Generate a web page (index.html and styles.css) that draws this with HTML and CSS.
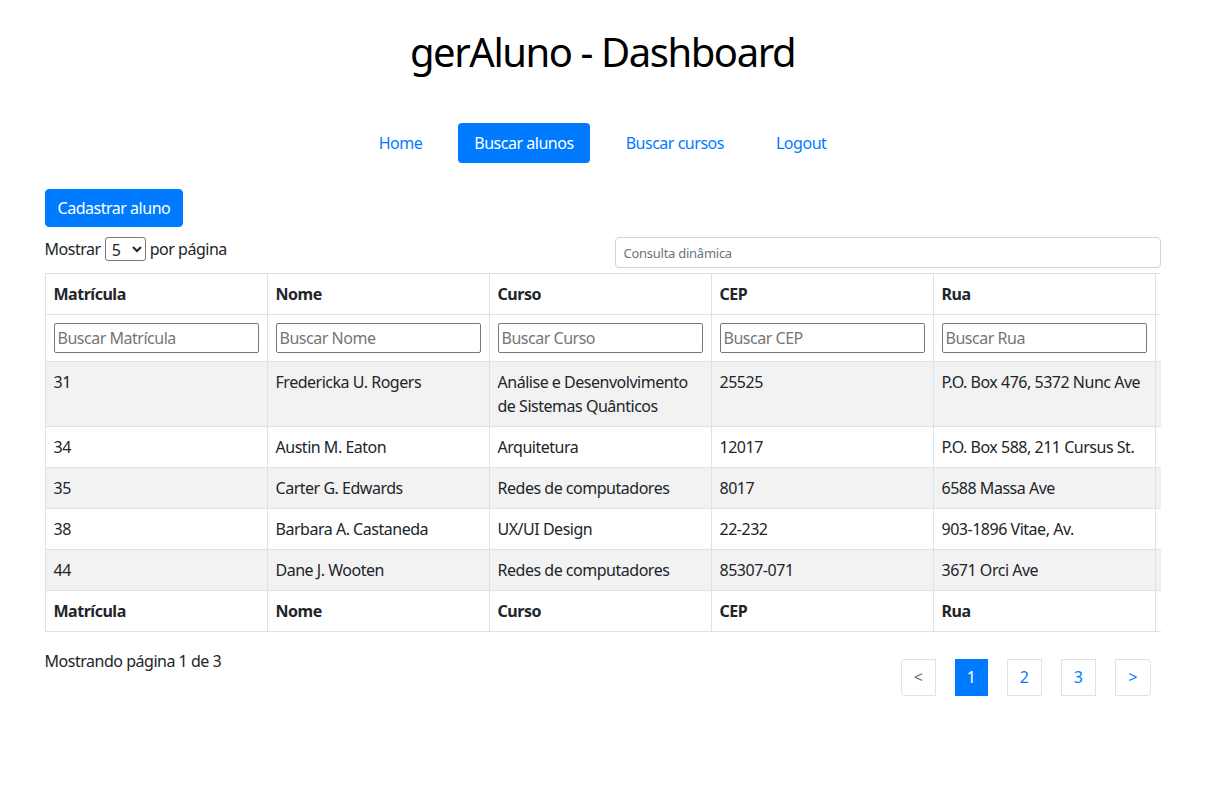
FILE: index.html
```html
<!DOCTYPE html>
<html lang="pt-br">
<head>
<meta charset="utf-8">
<title>gerAluno - Dashboard</title>
<link rel="stylesheet" href="styles.css">
</head>
<body>
<div class="page">
  <h1 class="title">gerAluno - Dashboard</h1>
  <nav class="nav">
    <a class="nav-link" href="#">Home</a>
    <a class="nav-link active" href="#">Buscar alunos</a>
    <a class="nav-link" href="#">Buscar cursos</a>
    <a class="nav-link" href="#">Logout</a>
  </nav>
  <button class="btn-primary">Cadastrar aluno</button>
  <div class="toolbar">
    <label class="length">Mostrar <select class="length-select"><option>5</option><option>10</option><option>25</option></select> por página</label>
    <input class="search" type="text" placeholder="Consulta dinâmica">
  </div>
  <div class="table-wrap">
    <table class="grid">
      <thead>
        <tr class="head"><th>Matrícula</th><th>Nome</th><th>Curso</th><th>CEP</th><th>Rua</th><th></th></tr>
        <tr class="filters">
          <td><input class="filter" placeholder="Buscar Matrícula"></td>
          <td><input class="filter" placeholder="Buscar Nome"></td>
          <td><input class="filter" placeholder="Buscar Curso"></td>
          <td><input class="filter" placeholder="Buscar CEP"></td>
          <td><input class="filter" placeholder="Buscar Rua"></td>
          <td></td>
        </tr>
      </thead>
      <tbody>
        <tr class="odd"><td>31</td><td>Fredericka U. Rogers</td><td>Análise e Desenvolvimento de Sistemas Quânticos</td><td>25525</td><td>P.O. Box 476, 5372 Nunc Ave</td><td></td></tr>
        <tr><td>34</td><td>Austin M. Eaton</td><td>Arquitetura</td><td>12017</td><td>P.O. Box 588, 211 Cursus St.</td><td></td></tr>
        <tr class="odd"><td>35</td><td>Carter G. Edwards</td><td>Redes de computadores</td><td>8017</td><td>6588 Massa Ave</td><td></td></tr>
        <tr><td>38</td><td>Barbara A. Castaneda</td><td>UX/UI Design</td><td>22-232</td><td>903-1896 Vitae, Av.</td><td></td></tr>
        <tr class="odd"><td>44</td><td>Dane J. Wooten</td><td>Redes de computadores</td><td>85307-071</td><td>3671 Orci Ave</td><td></td></tr>
      </tbody>
      <tfoot>
        <tr class="head"><th>Matrícula</th><th>Nome</th><th>Curso</th><th>CEP</th><th>Rua</th><th></th></tr>
      </tfoot>
    </table>
  </div>
  <div class="bottom">
    <div class="info">Mostrando página 1 de 3</div>
    <ul class="pagination">
      <li class="page-item disabled first"><a href="#">&lt;</a></li>
      <li class="page-item active"><a href="#">1</a></li>
      <li class="page-item"><a href="#">2</a></li>
      <li class="page-item"><a href="#">3</a></li>
      <li class="page-item last"><a href="#">&gt;</a></li>
    </ul>
  </div>
</div>
</body>
</html>
```
FILE: styles.css
```css
* { box-sizing: border-box; }
html, body { margin: 0; padding: 0; background: #fff; }
body {
  font-family: "Noto Sans", "Open Sans", sans-serif;
  font-size: 16px;
  line-height: 1.5;
  letter-spacing: -0.03em;
  color: #212529;
}
.page {
  width: 1116px;
  margin: 0 auto;
  padding-top: 28px;
}
.title {
  margin: 0;
  text-align: center;
  font-size: 40px;
  font-weight: 400;
  line-height: 48px;
  letter-spacing: -0.036em;
  color: #000;
}
.nav {
  display: flex;
  justify-content: center;
  gap: 20px;
  margin-top: 47px;
}
.nav-link {
  display: block;
  padding: 8px 16px;
  color: #007bff;
  text-decoration: none;
  border-radius: 4px;
  line-height: 24px;
}
.nav-link.active { background: #007bff; color: #fff; }
.btn-primary {
  display: block;
  margin-top: 26px;
  height: 38px;
  padding: 6px 12px;
  font-family: inherit;
  font-size: 16px;
  letter-spacing: -0.03em;
  line-height: 24px;
  color: #fff;
  background: #007bff;
  border: 1px solid #007bff;
  border-radius: 4px;
}
.toolbar {
  display: flex;
  justify-content: space-between;
  align-items: flex-start;
  margin-top: 10px;
  height: 36px;
}
.length { line-height: 24px; display: flex; align-items: center; gap: 4px; }
.length-select {
  font-family: inherit;
  font-size: 16px;
  height: 24px;
  width: 41px;
  padding: 0 2px;
  border: 1px solid #767676;
  border-radius: 3px;
  background: #fff;
  color: #212529;
}
.search {
  width: 546px;
  height: 31px;
  padding: 4px 8px;
  font-family: inherit;
  font-size: 13px;
  letter-spacing: -0.02em;
  border: 1px solid #ced4da;
  border-radius: 4px;
  color: #495057;
}
.search::placeholder { color: #6c757d; }
.table-wrap {
  width: 1116px;
  overflow: hidden;
}
.grid {
  table-layout: fixed;
  border-collapse: collapse;
  width: 1332px;
}
.grid th, .grid td {
  width: 222px;
  padding: 8px;
  border: 1px solid #dee2e6;
  text-align: left;
  vertical-align: top;
  line-height: 24px;
}
.grid th { font-weight: 700; }
.grid tr.odd td { background: #f2f2f2; }
.filter {
  display: block;
  width: 100%;
  height: 30px;
  padding: 1px 3px;
  font-family: inherit;
  font-size: 16px;
  letter-spacing: -0.03em;
  border: 1px solid #767676;
  border-radius: 2px;
  color: #212529;
}
.filter::placeholder { color: #757575; }
.bottom {
  display: flex;
  justify-content: space-between;
  align-items: flex-start;
  margin-top: 17px;
}
.info { line-height: 24px; }
.pagination {
  display: flex;
  list-style: none;
  margin: 10px 10px 0 0;
  padding: 0;
  gap: 19px;
}
.page-item a {
  display: block;
  width: 35px;
  height: 37px;
  line-height: 35px;
  text-align: center;
  color: #007bff;
  text-decoration: none;
  border: 1px solid #dee2e6;
}
.page-item.first a { border-radius: 4px 0 0 4px; color: #6c757d; }
.page-item.last a { border-radius: 0 4px 4px 0; width: 36px; }
.page-item.active a { background: #007bff; border-color: #007bff; color: #fff; width: 33px; }
```
